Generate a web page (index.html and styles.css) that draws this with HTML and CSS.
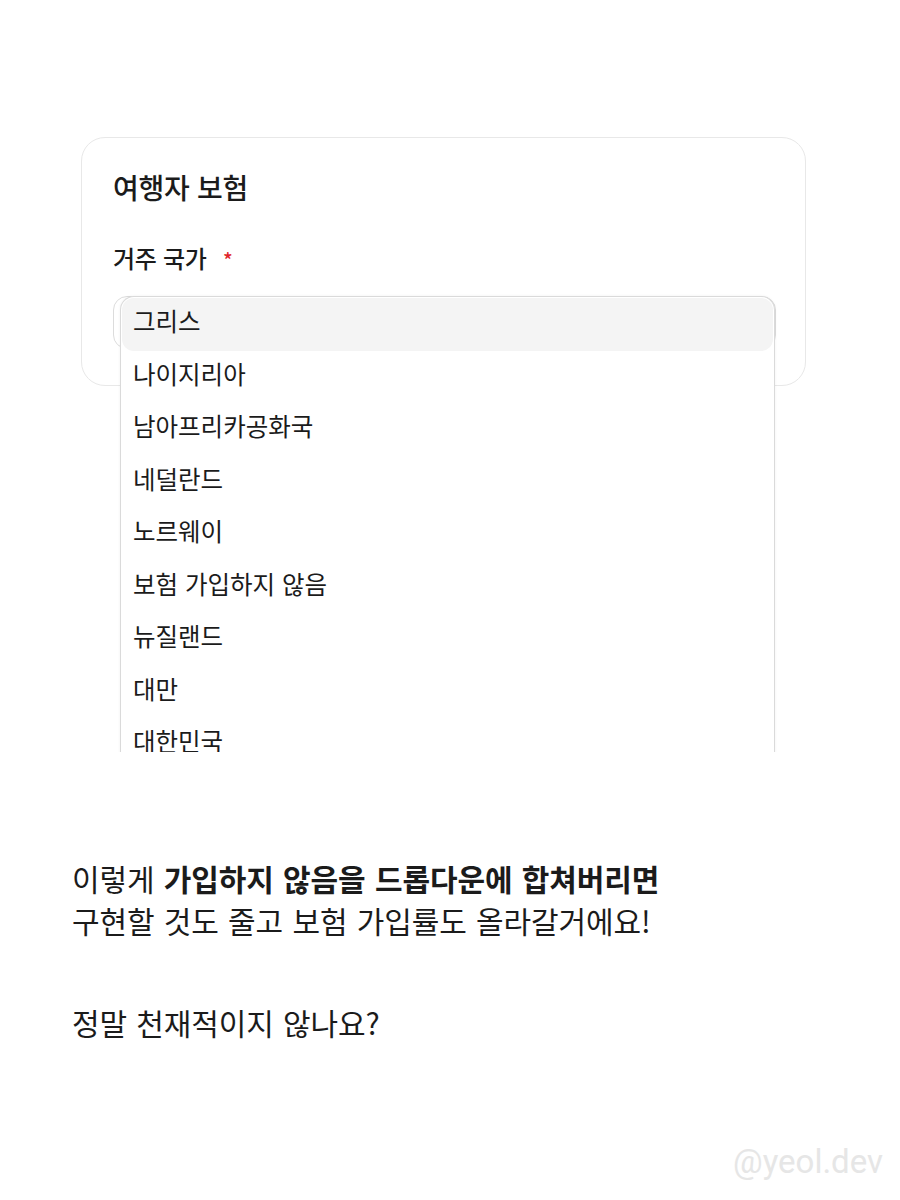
FILE: index.html
```html
<!DOCTYPE html>
<html lang="ko">
<head>
    <meta charset="UTF-8">
    <meta name="viewport" content="width=device-width, initial-scale=1.0">
    <title>여행자 보험</title>
    <link rel="stylesheet" href="styles.css">
</head>
<body>
    <div class="stage">
        <div class="card">
            <h3 class="card-title">여행자 보험</h3>
            <div class="form-group">
                <label class="field-label">거주 국가 <span class="required">*</span></label>
                <div class="select-wrap">
                    <div class="select-box"></div>
                    <ul class="dropdown">
                        <li class="active">그리스</li>
                        <li>나이지리아</li>
                        <li>남아프리카공화국</li>
                        <li>네덜란드</li>
                        <li>노르웨이</li>
                        <li>보험 가입하지 않음</li>
                        <li>뉴질랜드</li>
                        <li>대만</li>
                        <li>대한민국</li>
                    </ul>
                </div>
            </div>
        </div>
    </div>

    <div class="copy">
        <p>이렇게 <b>가입하지 않음을 드롭다운에 합쳐버리면</b><br>구현할 것도 줄고 보험 가입률도 올라갈거에요!</p>
        <p>정말 천재적이지 않나요?</p>
    </div>

    <footer class="watermark">@yeol.dev</footer>
</body>
</html>
```

FILE: styles.css
```css
* {
    margin: 0;
    padding: 0;
    box-sizing: border-box;
}

body {
    font-family: "Noto Sans CJK KR", "Noto Sans", sans-serif;
    background-color: #fff;
    color: #1b1b1b;
    display: flex;
    flex-direction: column;
    height: 1200px;
    overflow: hidden;
}

.stage {
    height: 752px;
    overflow: hidden;
    padding-top: 137px;
}

.card {
    margin-left: 81px;
    width: 725px;
    border: 1.5px solid #e8e8e8;
    border-radius: 24px;
    padding: 31px 29px 36px 31px;
}

.card-title {
    font-size: 28px;
    font-weight: 500;
    line-height: 36px;
    letter-spacing: -0.3px;
}

.form-group {
    margin-top: 38px;
}

.field-label {
    display: block;
    font-size: 24px;
    font-weight: 500;
    line-height: 30px;
    letter-spacing: -0.3px;
    padding-bottom: 4px;
    margin-bottom: -4px;
}

.required {
    color: #e0262c;
    margin-left: 10px;
    font-size: 20px;
}

.select-wrap {
    position: relative;
    margin-top: 21px;
}

.select-box {
    height: 53px;
    border: 1px solid #dcdcdc;
    border-radius: 14px;
    background-color: #fff;
}

.dropdown {
    position: absolute;
    top: 0;
    left: 7px;
    right: 1px;
    list-style: none;
    background-color: #fff;
    border: 1px solid #dadada;
    border-bottom: none;
    border-radius: 14px 14px 0 0;
    padding-top: 1px;
    box-shadow: 0 0 3px rgba(0, 0, 0, 0.06);
}

.dropdown li {
    height: 52.5px;
    display: flex;
    align-items: center;
    padding: 0 0 7px 12px;
    font-size: 24.5px;
    letter-spacing: 0;
}

.dropdown li.active {
    background-color: #f4f4f4;
    border-radius: 12px;
    margin: 0 1px;
    padding-left: 11px;
}

.copy {
    margin-top: 105px;
    padding-left: 72px;
    font-size: 30px;
    line-height: 42px;
    letter-spacing: -0.1px;
    word-spacing: 1px;
}

.copy p + p {
    margin-top: 60px;
}

.copy b {
    font-weight: 700;
}

.watermark {
    margin-top: auto;
    padding: 0 17px 18px 0;
    text-align: right;
    font-family: Roboto, "Liberation Sans", sans-serif;
    font-size: 33px;
    line-height: 40px;
    color: #e6e6e6;
}
```
